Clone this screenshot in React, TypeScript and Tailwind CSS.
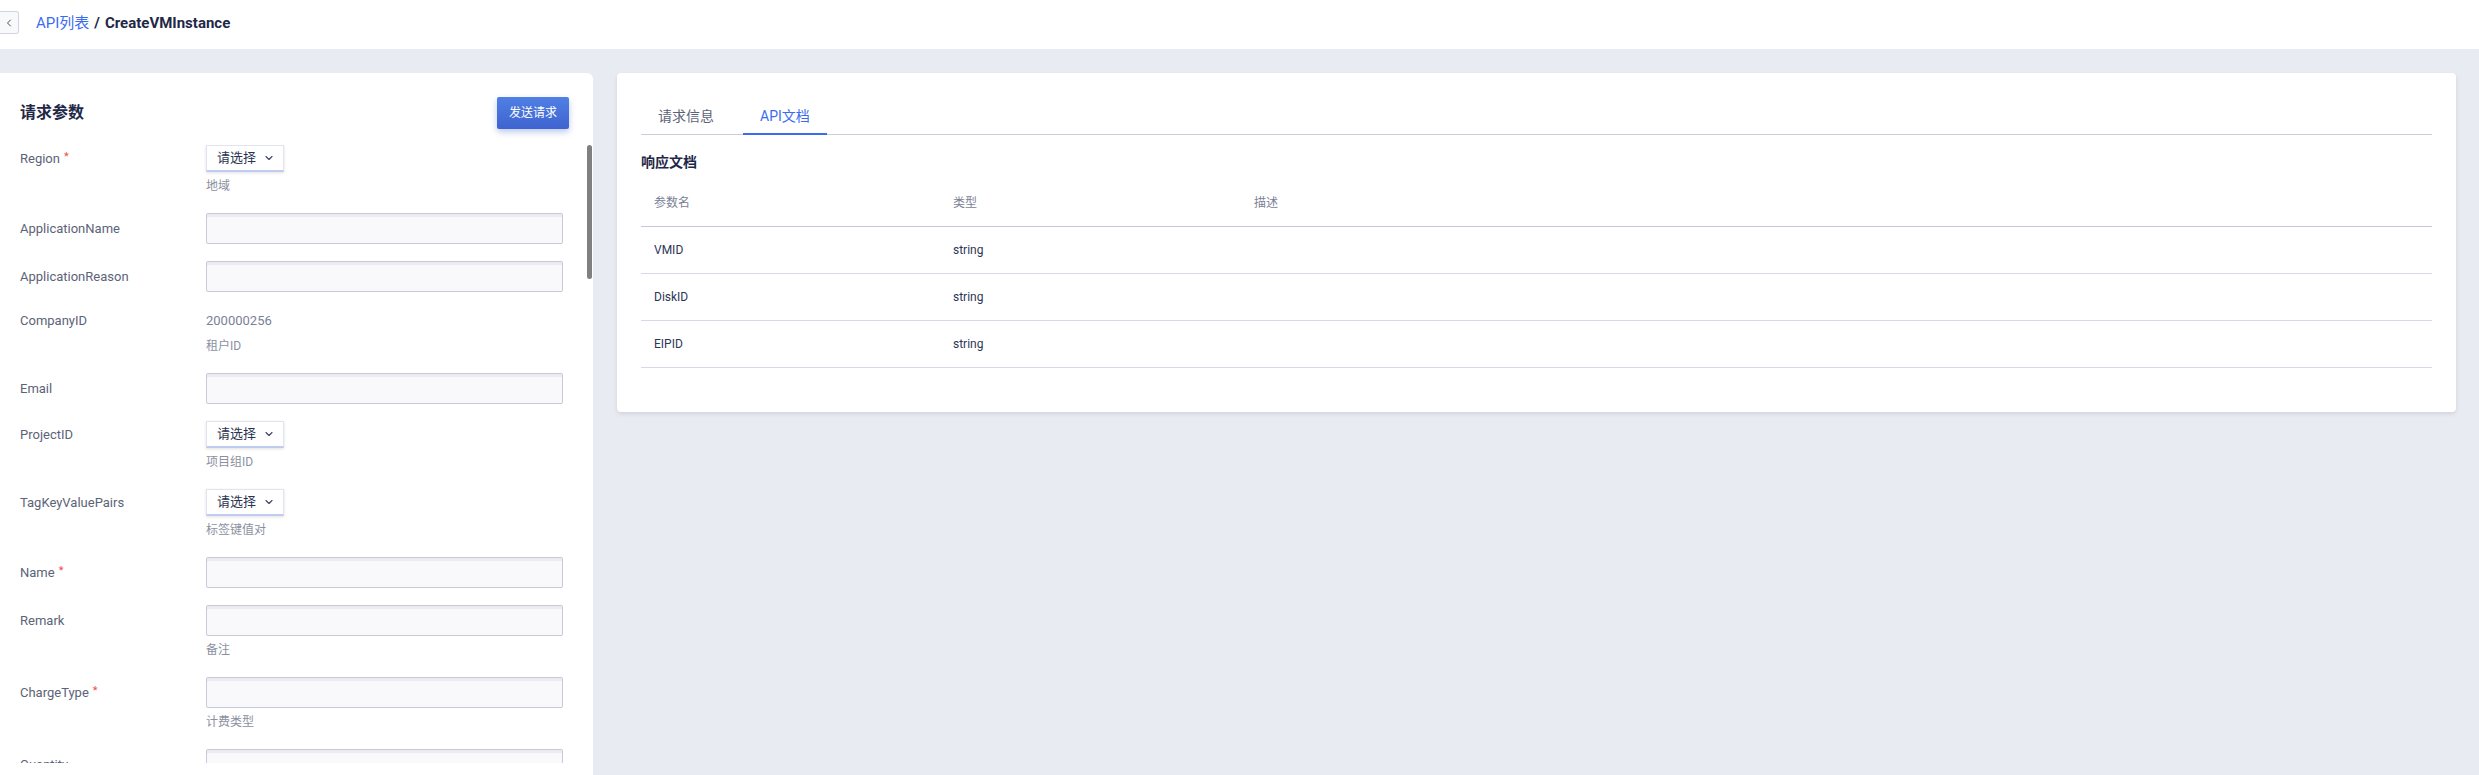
import { ChevronLeft, ChevronDown } from "lucide-react";

type Field = {
  name: string;
  required?: boolean;
  kind: "input" | "select" | "value";
  value?: string;
  hint?: string;
};

const fields: Field[] = [
  { name: "Region", required: true, kind: "select", hint: "地域" },
  { name: "ApplicationName", kind: "input" },
  { name: "ApplicationReason", kind: "input" },
  { name: "CompanyID", kind: "value", value: "200000256", hint: "租户ID" },
  { name: "Email", kind: "input" },
  { name: "ProjectID", kind: "select", hint: "项目组ID" },
  { name: "TagKeyValuePairs", kind: "select", hint: "标签键值对" },
  { name: "Name", required: true, kind: "input" },
  { name: "Remark", kind: "input", hint: "备注" },
  { name: "ChargeType", required: true, kind: "input", hint: "计费类型" },
  { name: "Quantity", kind: "input" },
  { name: "Period", kind: "input" },
];

const rows = [
  { name: "VMID", type: "string" },
  { name: "DiskID", type: "string" },
  { name: "EIPID", type: "string" },
];

function FieldRow({ f }: { f: Field }) {
  const h = f.kind === "select" ? "h-[27px]" : f.kind === "value" ? "h-[23px]" : "h-[31px]";
  return (
    <div className="flex items-start mb-[17px]">
      <div className={`w-[186px] shrink-0 flex items-center text-[13px] text-[#5c6378] ${h}`}>
        {f.name}
        {f.required && <span className="ml-[4px] text-[11px] text-[#f04b4b] -mt-[3px]">*</span>}
      </div>
      <div className="flex flex-col">
        {f.kind === "input" && (
          <div className="h-[31px] w-[357px] rounded-[2px] border border-[#c7cad9] bg-[#f9f9fb] shadow-[inset_0_3px_0_#ebebf0]" />
        )}
        {f.kind === "select" && (
          <div className="h-[27px] w-[78px] flex items-center justify-between pl-[10px] pr-[8px] bg-white border border-[#e1e4ee] border-b-2 border-b-[#bfcbef] shadow-[0_1px_3px_rgba(0,0,0,0.12)] text-[13px] text-[#2b3350]">
            请选择
            <ChevronDown size={12} strokeWidth={2.2} className="text-[#3a4260]" />
          </div>
        )}
        {f.kind === "value" && (
          <div className="leading-[23px] text-[13px] text-[#7b8194]">{f.value}</div>
        )}
        {f.hint && <div className="pt-1 leading-[20px] text-[12px] text-[#8b90a0]">{f.hint}</div>}
      </div>
    </div>
  );
}

export default function App() {
  return (
    <div className="h-[775px] w-full overflow-hidden bg-[#e9ebf3] font-['Roboto','Noto_Sans_CJK_SC',sans-serif]">
      <header className="h-[49px] bg-white flex items-start">
        <div className="mt-[11px] h-[23px] w-[19px] flex items-center justify-center border border-l-0 border-[#d0d4e4] rounded-r-[3px] bg-[#f8f9fb]">
          <ChevronLeft size={12} strokeWidth={2} className="text-[#4a5068]" />
        </div>
        <div className="ml-[17px] h-[46px] flex items-center text-[15px]">
          <span className="text-[#3b6cf0]">API列表</span>
          <span className="mx-[5px] font-bold text-[#1f2846]">/</span>
          <span className="font-bold text-[#1f2846]">CreateVMInstance</span>
        </div>
      </header>

      <main className="flex items-start gap-[24px] pt-[24px] pr-[23px]">
        <section className="w-[593px] h-[702px] shrink-0 bg-white rounded-tr-[6px] flex flex-col pb-[12px]">
          <div className="flex items-center justify-between pl-[20px] pr-[24px] pt-[24px] mb-[16px]">
            <h2 className="text-[16px] font-bold text-[#1f2846]">请求参数</h2>
            <button className="h-[32px] w-[72px] rounded-[2px] bg-gradient-to-b from-[#5080e4] to-[#3f63cf] text-[12px] text-white shadow-[0_3px_6px_rgba(63,99,207,0.35)]">
              发送请求
            </button>
          </div>
          <div className="flex flex-1 min-h-0">
            <div className="flex-1 overflow-hidden pl-[20px]">
              {fields.map((f) => (
                <FieldRow key={f.name} f={f} />
              ))}
            </div>
            <div className="w-[6px] shrink-0">
              <div className="h-[134px] w-[5px] rounded-full bg-[#808080]" />
            </div>
          </div>
        </section>

        <section className="flex-1 bg-white rounded-[4px] shadow-[0_2px_4px_rgba(0,0,0,0.1)] px-[24px] pt-[24px] pb-[44px]">
          <div className="flex border-b border-[#c9ced8]">
            <div className="h-[37px] px-[17px] mr-[12px] flex items-center pt-[2px] text-[14px] text-[#5c6378]">请求信息</div>
            <div className="relative h-[37px] px-[17px] flex items-center pt-[2px] text-[14px] text-[#3b6cf0]">
              API文档
              <div className="absolute left-0 right-0 -bottom-[1px] h-[2px] bg-[#3b6cf0]" />
            </div>
          </div>
          <h3 className="mt-[17px] mb-[8px] leading-[20px] text-[14px] font-bold text-[#1e2747]">响应文档</h3>
          <div className="text-[12px]">
            <div className="flex h-[47px] items-center border-b border-[#c5c9d3] text-[#7b8194]">
              <div className="w-[299px] pl-[13px]">参数名</div>
              <div className="w-[301px] pl-[13px]">类型</div>
              <div className="flex-1 pl-[13px]">描述</div>
            </div>
            {rows.map((r) => (
              <div key={r.name} className="flex h-[47px] items-center border-b border-[#d6d9ea] text-[#2d3557]">
                <div className="w-[299px] pl-[13px]">{r.name}</div>
                <div className="w-[301px] pl-[13px]">{r.type}</div>
                <div className="flex-1 pl-[13px]" />
              </div>
            ))}
          </div>
        </section>
      </main>
    </div>
  );
}
